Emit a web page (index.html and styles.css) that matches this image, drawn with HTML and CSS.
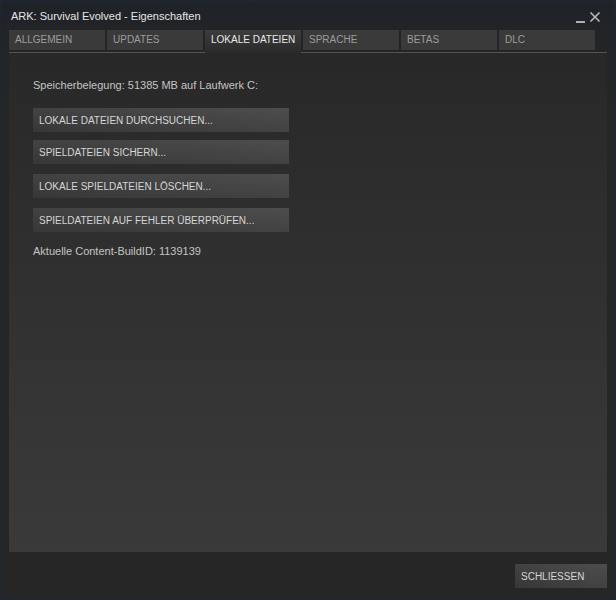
FILE: index.html
```html
<!DOCTYPE html>
<html lang="de">
<head>
  <meta charset="UTF-8">
  <title>ARK: Survival Evolved - Eigenschaften</title>
  <link rel="stylesheet" href="styles.css">
</head>
<body>
  <div class="window">
    <!-- Title bar -->
    <div class="title-bar">
      <span class="title">ARK: Survival Evolved - Eigenschaften</span>
      <div class="window-controls">
        <span class="minimize"></span>
        <svg class="close" viewBox="0 0 12 12" width="12" height="12">
          <path d="M1.5 1.5 L10.5 10.5 M10.5 1.5 L1.5 10.5" stroke="#b8b8b8" stroke-width="1.6" fill="none"></path>
        </svg>
      </div>
    </div>

    <!-- Tabs -->
    <div class="tab-row">
      <div class="tab">ALLGEMEIN</div>
      <div class="tab">UPDATES</div>
      <div class="tab active">LOKALE DATEIEN</div>
      <div class="tab">SPRACHE</div>
      <div class="tab">BETAS</div>
      <div class="tab">DLC</div>
    </div>

    <!-- Panel -->
    <div class="panel">
      <p class="info">Speicherbelegung: 51385 MB auf Laufwerk C:</p>
      <div class="actions">
        <button class="btn wide">LOKALE DATEIEN DURCHSUCHEN...</button>
        <button class="btn wide">SPIELDATEIEN SICHERN...</button>
        <button class="btn wide">LOKALE SPIELDATEIEN LÖSCHEN...</button>
        <button class="btn wide">SPIELDATEIEN AUF FEHLER ÜBERPRÜFEN...</button>
      </div>
      <p class="info build">Aktuelle Content-BuildID: 1139139</p>
    </div>

    <div class="footer">
      <button class="btn close-btn">SCHLIESSEN</button>
    </div>
  </div>
</body>
</html>
```

FILE: styles.css
```css
* {
  margin: 0;
  padding: 0;
  box-sizing: border-box;
  font-family: "Liberation Sans", Arial, sans-serif;
}

body {
  background-color: #262626;
}

.window {
  width: 616px;
  height: 600px;
  border: 1px solid #1c2735;
  background: linear-gradient(to bottom, #1f2228 0px, #242526 60px, #262626 140px);
  display: flex;
  flex-direction: column;
}

.title-bar {
  height: 29px;
  display: flex;
  align-items: flex-start;
  justify-content: space-between;
  padding: 9px 0 0 10px;
}

.title {
  font-size: 11px;
  color: #e6e6e6;
}

.window-controls {
  display: flex;
  align-items: flex-end;
  gap: 4px;
  margin-right: 14px;
  margin-top: 1px;
}

.minimize {
  display: block;
  width: 9px;
  height: 2px;
  background-color: #b0b0b0;
}

.close {
  display: block;
}

.tab-row {
  display: flex;
  gap: 2px;
  margin: 0 8px;
  height: 23px;
  border-bottom: 1px solid #555555;
  width: 598px;
}

.tab {
  width: 96px;
  height: 20px;
  background-color: #3a3a3a;
  color: #9c9c9c;
  font-size: 10px;
  line-height: 20px;
  padding-left: 6px;
  white-space: nowrap;
}

.tab.active {
  height: 23px;
  margin-bottom: -1px;
  background: linear-gradient(to bottom, #3d3d3d, #2a2a2a);
  color: #e8e8e8;
}

.panel {
  margin: 0 8px;
  width: 598px;
  height: 499px;
  background: linear-gradient(to bottom, #282828, #3a3a3a);
  padding: 26px 24px 0 24px;
}

.info {
  font-size: 11px;
  color: #c4c4c4;
  line-height: 13px;
}

.actions {
  display: flex;
  flex-direction: column;
  gap: 10px;
  margin-top: 16px;
}

.actions .btn:first-child {
  margin-bottom: -2px;
}

.btn {
  border: none;
  background: linear-gradient(to top right, #373737, #4d4d4d);
  color: #d6d6d6;
  font-size: 10px;
  text-align: left;
  padding-left: 6px;
  height: 24px;
  white-space: nowrap;
}

.btn.wide {
  width: 256px;
}

.build {
  margin-top: 13px;
}

.footer {
  display: flex;
  justify-content: flex-end;
  padding: 12px 8px 0 0;
}

.close-btn {
  width: 92px;
}
```
